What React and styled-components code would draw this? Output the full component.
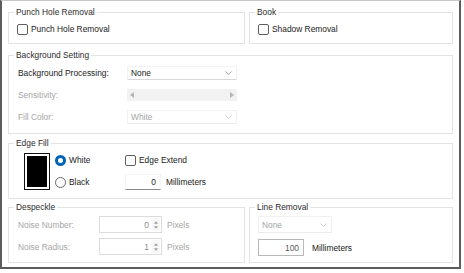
import React from "react";
import styled, { createGlobalStyle } from "styled-components";

const GlobalStyle = createGlobalStyle`
  html, body {
    margin: 0;
    padding: 0;
    background: #ffffff;
  }
  body {
    font-family: "Liberation Sans", Arial, sans-serif;
    font-size: 8.4px;
    color: #1a1a1a;
  }
`;

const Frame = styled.div`
  box-sizing: border-box;
  width: 461px;
  height: 269px;
  border: 2px solid #5c5c5c;
  border-top: 1px solid #c8c8c8;
  padding: 6px 6px 0 6px;
  display: flex;
  flex-direction: column;
`;

const Row = styled.div`
  display: flex;
  gap: 4px;
  margin-top: ${(p) => p.$top || 0}px;
`;

const Group = styled.fieldset`
  box-sizing: border-box;
  margin: 0;
  padding: 0;
  border: 1px solid #e3e3e3;
  height: ${(p) => p.$h}px;
  width: ${(p) => (p.$w ? `${p.$w}px` : "auto")};
  flex: ${(p) => (p.$w ? "none" : "1")};
  min-width: 0;
`;

const Legend = styled.legend`
  margin-left: 5px;
  padding: 0 2px;
  line-height: 10px;
  color: #2b2b2b;
`;

const Body = styled.div`
  padding: ${(p) => p.$pad};
`;

const CheckRow = styled.label`
  display: flex;
  align-items: center;
  gap: 3px;
  height: 14px;
  color: ${(p) => (p.$disabled ? "#a3a3a3" : "#1a1a1a")};
`;

const Box = styled.span`
  box-sizing: border-box;
  width: 11px;
  height: 11px;
  border: 1px solid #5f5f5f;
  border-radius: 2px;
  background: #fff;
  flex: none;
`;

const Radio = styled.span`
  box-sizing: border-box;
  width: 11px;
  height: 11px;
  border-radius: 50%;
  flex: none;
  border: ${(p) => (p.$on ? "3px solid #0063b6" : "1px solid #6a6a6a")};
  background: #fff;
`;

const FormGrid = styled.div`
  display: grid;
  grid-template-columns: ${(p) => p.$cols};
  grid-auto-rows: ${(p) => p.$rowH}px;
  row-gap: ${(p) => p.$gap}px;
  align-items: center;
`;

const Label = styled.span`
  color: ${(p) => (p.$disabled ? "#a6a6a6" : "#1a1a1a")};
  white-space: nowrap;
`;

const Select = styled.div`
  box-sizing: border-box;
  width: ${(p) => p.$w}px;
  height: ${(p) => p.$h || 14}px;
  display: flex;
  align-items: center;
  justify-content: space-between;
  padding: 0 4px 0 3px;
  background: #fff;
  border: 1px solid ${(p) => (p.$disabled ? "#f1f1f1" : "#f3f3f3")};
  border-bottom-color: ${(p) => (p.$disabled ? "#ececec" : "#d8d8d8")};
  color: ${(p) => (p.$disabled ? "#a6a6a6" : "#1a1a1a")};
`;

const Slider = styled.div`
  box-sizing: border-box;
  width: 110px;
  height: 12px;
  background: #f2f2f2;
  display: flex;
  align-items: center;
  justify-content: space-between;
  padding: 0 3px;
`;

const EdgeGrid = styled.div`
  display: grid;
  grid-template-columns: 26px 65px auto;
  grid-template-rows: 16px 16px;
  row-gap: 6px;
  column-gap: 5px;
  align-items: center;
  padding: 4px 0 0 15px;
`;

const Swatch = styled.div`
  grid-row: 1 / 3;
  box-sizing: border-box;
  width: 26px;
  height: 37px;
  border: 1.5px solid #111;
  padding: 2px;
  background: #fff;
  &::after {
    content: "";
    display: block;
    width: 100%;
    height: 100%;
    background: #000;
  }
`;

const Inline = styled.div`
  display: flex;
  align-items: center;
  gap: ${(p) => p.$gap || 4}px;
  color: ${(p) => (p.$disabled ? "#a6a6a6" : "#1a1a1a")};
`;

const NumInput = styled.div`
  box-sizing: border-box;
  width: ${(p) => p.$w}px;
  height: ${(p) => p.$h || 17}px;
  display: flex;
  align-items: center;
  justify-content: flex-end;
  padding-right: ${(p) => (p.$spin ? 1 : 4)}px;
  background: #fff;
  border: 1px solid ${(p) => p.$border || "#d9d9d9"};
  border-bottom-color: ${(p) => p.$bottom || p.$border || "#d9d9d9"};
  color: ${(p) => p.$color || "#1a1a1a"};
  gap: 3px;
`;

const Spin = styled.div`
  width: 8px;
  height: 13px;
  display: flex;
  flex-direction: column;
  align-items: center;
  justify-content: center;
  gap: 2px;
  background: #f7f7f7;
`;

const Chevron = ({ color = "#8a8a8a" }) => (
  <svg width="7" height="4" viewBox="0 0 7 4">
    <polyline points="0.5,0.5 3.5,3.5 6.5,0.5" fill="none" stroke={color} strokeWidth="0.8" />
  </svg>
);

const Tri = ({ dir, color = "#b5b5b5", size = 5 }) => {
  const pts = {
    left: "4,0 4,6 0,3",
    right: "0,0 0,6 4,3",
    up: "0,4 6,4 3,0",
    down: "0,0 6,0 3,4",
  }[dir];
  const horiz = dir === "left" || dir === "right";
  return (
    <svg width={horiz ? 4 : size} height={horiz ? 6 : 3} viewBox={horiz ? "0 0 4 6" : "0 0 6 4"}>
      <polygon points={pts} fill={color} />
    </svg>
  );
};

const Spinner = () => (
  <Spin>
    <Tri dir="up" color="#9a9a9a" size={4} />
    <Tri dir="down" color="#9a9a9a" size={4} />
  </Spin>
);

export default function App() {
  return (
    <>
      <GlobalStyle />
      <Frame>
        <Row>
          <Group $w={237} $h={37}>
            <Legend>Punch Hole Removal</Legend>
            <Body $pad="5px 0 0 8px">
              <CheckRow>
                <Box />
                Punch Hole Removal
              </CheckRow>
            </Body>
          </Group>
          <Group $h={37}>
            <Legend>Book</Legend>
            <Body $pad="5px 0 0 8px">
              <CheckRow>
                <Box />
                Shadow Removal
              </CheckRow>
            </Body>
          </Group>
        </Row>

        <Row $top={6}>
          <Group $h={84}>
            <Legend>Background Setting</Legend>
            <Body $pad="6px 0 0 9px">
              <FormGrid $cols="109px auto" $rowH={14} $gap={8}>
                <Label>Background Processing:</Label>
                <Select $w={110}>
                  None
                  <Chevron />
                </Select>
                <Label $disabled>Sensitivity:</Label>
                <Slider>
                  <Tri dir="left" />
                  <Tri dir="right" />
                </Slider>
                <Label $disabled>Fill Color:</Label>
                <Select $w={110} $disabled>
                  White
                  <Chevron color="#c8c8c8" />
                </Select>
              </FormGrid>
            </Body>
          </Group>
        </Row>

        <Row $top={4}>
          <Group $h={61}>
            <Legend>Edge Fill</Legend>
            <EdgeGrid>
              <Swatch />
              <Inline $gap={3}>
                <Radio $on />
                White
              </Inline>
              <CheckRow>
                <Box />
                Edge Extend
              </CheckRow>
              <Inline $gap={3}>
                <Radio />
                Black
              </Inline>
              <Inline $gap={5}>
                <NumInput $w={36} $h={16} $border="#f3f3f3" $bottom="#8a8a8a">
                  0
                </NumInput>
                Millimeters
              </Inline>
            </EdgeGrid>
          </Group>
        </Row>

        <Row $top={3}>
          <Group $w={237} $h={61}>
            <Legend>Despeckle</Legend>
            <Body $pad="4px 0 0 9px">
              <FormGrid $cols="81px auto" $rowH={17} $gap={5}>
                <Label $disabled>Noise Number:</Label>
                <Inline $gap={5} $disabled>
                  <NumInput $w={63} $spin $border="#dcdcdc" $color="#8c8c8c">
                    0
                    <Spinner />
                  </NumInput>
                  Pixels
                </Inline>
                <Label $disabled>Noise Radius:</Label>
                <Inline $gap={5} $disabled>
                  <NumInput $w={63} $spin $border="#dcdcdc" $color="#8c8c8c">
                    1
                    <Spinner />
                  </NumInput>
                  Pixels
                </Inline>
              </FormGrid>
            </Body>
          </Group>
          <Group $h={61}>
            <Legend>Line Removal</Legend>
            <Body $pad="4px 0 0 8px">
              <FormGrid $cols="auto" $rowH={17} $gap={6}>
                <Select $w={74} $h={17} $disabled>
                  None
                  <Chevron color="#c8c8c8" />
                </Select>
                <Inline $gap={8}>
                  <NumInput $w={46} $border="#b8b8b8" $color="#5a5a5a">
                    100
                  </NumInput>
                  Millimeters
                </Inline>
              </FormGrid>
            </Body>
          </Group>
        </Row>
      </Frame>
    </>
  );
}
